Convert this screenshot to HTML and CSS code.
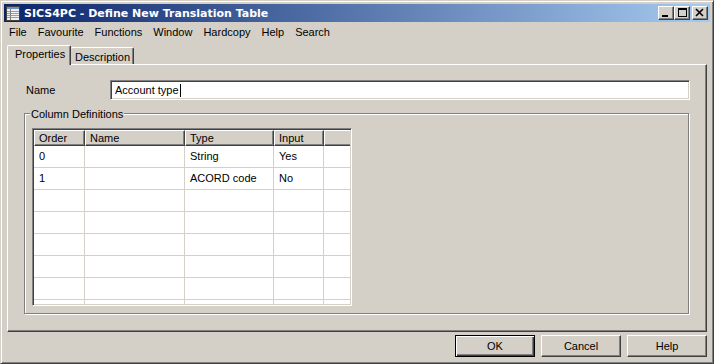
FILE: index.html
```html
<!Doctype html>
<html lang='en'>
<head>
    <meta charset='utf-8'>
    <title>SICS4PC - Define New Translation Table</title>
    <link rel="stylesheet" href="styles.css">
</head>
<body>
    <div class='window'>
        <div class='titlebar'>
            <svg class='app-icon' width='14' height='15' viewBox='0 0 14 15' shape-rendering='crispEdges'>
                <rect x='0.5' y='0.5' width='13' height='14' fill='#f0f0f0' stroke='#404040'/>
                <rect x='1' y='1' width='12' height='2' fill='#6f8fc8'/>
                <path d='M1 5.5H13M1 7.5H13M1 9.5H13M1 11.5H13' stroke='#8aa0c8'/>
                <path d='M4.5 3V14' stroke='#808080'/>
            </svg>
            <span class='title'>SICS4PC - Define New Translation Table</span>
            <div class='caption-btns'>
                <span class='cbtn'>
                    <svg width='14' height='12' viewBox='0 0 14 12' shape-rendering='crispEdges'>
                        <rect x='3' y='8' width='6' height='2' fill='#000'/>
                    </svg>
                </span>
                <span class='cbtn'>
                    <svg width='14' height='12' viewBox='0 0 14 12' shape-rendering='crispEdges'>
                        <rect x='3.5' y='1.5' width='8' height='8' fill='none' stroke='#000'/>
                        <rect x='3' y='1' width='9' height='2' fill='#000'/>
                    </svg>
                </span>
                <span class='cbtn close'>
                    <svg width='14' height='12' viewBox='0 0 14 12'>
                        <path d='M3 2L10 9M10 2L3 9' stroke='#000' stroke-width='1.6'/>
                    </svg>
                </span>
            </div>
        </div>

        <div class='menubar'>
            <span>File</span>
            <span>Favourite</span>
            <span>Functions</span>
            <span>Window</span>
            <span>Hardcopy</span>
            <span>Help</span>
            <span>Search</span>
        </div>

        <div class='tabs'>
            <div class='tab active'>Properties</div>
            <div class='tab'>Description</div>
        </div>

        <div class='panel'>
            <div class='field-row'>
                <label>Name</label>
                <div class='textbox'>Account type<span class='caret'></span></div>
            </div>

            <div class='group'>
                <div class='group-title'>Column Definitions</div>
                <div class='grid'>
                    <div class='grid-row head'>
                        <div>Order</div><div>Name</div><div>Type</div><div>Input</div><div></div>
                    </div>
                    <div class='grid-row'>
                        <div>0</div><div></div><div>String</div><div>Yes</div><div></div>
                    </div>
                    <div class='grid-row'>
                        <div>1</div><div></div><div>ACORD code</div><div>No</div><div></div>
                    </div>
                    <div class='grid-row'><div></div><div></div><div></div><div></div><div></div></div>
                    <div class='grid-row'><div></div><div></div><div></div><div></div><div></div></div>
                    <div class='grid-row'><div></div><div></div><div></div><div></div><div></div></div>
                    <div class='grid-row'><div></div><div></div><div></div><div></div><div></div></div>
                    <div class='grid-row'><div></div><div></div><div></div><div></div><div></div></div>
                    <div class='grid-row'><div></div><div></div><div></div><div></div><div></div></div>
                </div>
            </div>
        </div>

        <div class='buttons'>
            <button class='btn default'>OK</button>
            <button class='btn'>Cancel</button>
            <button class='btn'>Help</button>
        </div>
    </div>
</body>
</html>
```

FILE: styles.css
```css
html,
body {
    margin: 0;
    background-color: #d4d0c8;
    font-family: "Liberation Sans", Arial, sans-serif;
    font-size: 11px;
    color: #000;
}

.window {
    box-sizing: border-box;
    width: 714px;
    height: 364px;
    padding: 3px;
    border: 1px solid;
    border-color: #d4d0c8 #404040 #404040 #d4d0c8;
    box-shadow: inset 1px 1px #ffffff, inset -1px -1px #808080;
    background-color: #d4d0c8;
    display: flex;
    flex-direction: column;
}

/* title bar */
.titlebar {
    height: 18px;
    padding-left: 2px;
    display: flex;
    align-items: center;
    background: linear-gradient(to right, #0a246a, #a6caf0);
}
.app-icon {
    display: block;
    margin-right: 4px;
}
.title {
    color: #ffffff;
    font-family: "DejaVu Sans", sans-serif;
    font-weight: bold;
    font-size: 11px;
    white-space: nowrap;
}
.caption-btns {
    margin-left: auto;
    margin-right: 2px;
    display: flex;
}
.cbtn {
    box-sizing: border-box;
    width: 16px;
    height: 14px;
    border: 1px solid;
    border-color: #ffffff #404040 #404040 #ffffff;
    box-shadow: inset -1px -1px #808080;
    background-color: #d4d0c8;
}
.cbtn svg {
    display: block;
}
.cbtn.close {
    margin-left: 2px;
}

/* menu */
.menubar {
    height: 19px;
    padding-left: 5px;
    display: flex;
    align-items: center;
    gap: 11px;
}

/* tabs */
.tabs {
    height: 19px;
    margin: 4px 0 0 3px;
    display: flex;
    align-items: flex-start;
}
.tab {
    box-sizing: border-box;
    width: 63px;
    height: 17px;
    margin-top: 2px;
    padding: 3px 0 0 4px;
    line-height: 13px;
    border-top: 1px solid #ffffff;
    border-right: 1px solid #404040;
    box-shadow: inset -1px 0 #808080;
    border-radius: 2px 2px 0 0;
    background-color: #d4d0c8;
}
.tab.active {
    position: relative;
    z-index: 1;
    width: 64px;
    height: 20px;
    margin-top: 0;
    padding: 2px 0 0 7px;
    border-left: 1px solid #ffffff;
}

.panel {
    box-sizing: border-box;
    height: 268px;
    margin: 0 3px;
    padding: 15px 16px 0 16px;
    border: 1px solid;
    border-color: #ffffff #404040 #404040 #ffffff;
    box-shadow: inset -1px -1px #808080;
}

.field-row {
    height: 20px;
    display: flex;
    align-items: center;
}
.field-row label {
    width: 84px;
    padding-left: 2px;
}
.textbox {
    box-sizing: border-box;
    flex: 1;
    height: 20px;
    padding-left: 4px;
    line-height: 18px;
    border: 1px solid;
    border-color: #808080 #ffffff #ffffff #808080;
    box-shadow: inset 1px 1px #404040, inset -1px -1px #d4d0c8;
    background-color: #ffffff;
}
.caret {
    display: inline-block;
    width: 1px;
    height: 13px;
    margin-left: 1px;
    vertical-align: -3px;
    background-color: #000;
}

/* group box */
.group {
    box-sizing: border-box;
    height: 201px;
    margin: 13px 1px 0 0;
    padding-left: 5px;
    border: 1px solid #808080;
    box-shadow: inset 1px 1px #ffffff, 1px 1px #ffffff;
}
.group-title {
    width: fit-content;
    margin-top: -7px;
    padding: 0 1px;
    line-height: 14px;
    background-color: #d4d0c8;
}

.grid {
    box-sizing: border-box;
    width: 320px;
    height: 178px;
    margin: 7px 0 0 2px;
    padding: 1px;
    overflow: hidden;
    border: 1px solid;
    border-color: #808080 #ffffff #ffffff #808080;
    box-shadow: inset 1px 1px #404040, inset -1px -1px #d4d0c8;
    background-color: #ffffff;
}
.grid-row {
    display: grid;
    grid-template-columns: 51px 100px 89px 50px 26px;
    height: 22px;
}
.grid-row div {
    box-sizing: border-box;
    padding-left: 5px;
    line-height: 21px;
    white-space: nowrap;
    border-right: 1px solid #d4d0c8;
    border-bottom: 1px solid #d4d0c8;
}
.grid-row div:last-child {
    border-right: 0;
}
.grid-row.head {
    height: 16px;
    background-color: #d4d0c8;
}
.grid-row.head div {
    padding-left: 4px;
    line-height: 14px;
    border: 0;
    border-top: 1px solid #ffffff;
    border-left: 1px solid #ffffff;
    border-right: 1px solid #404040;
    border-bottom: 1px solid #404040;
    box-shadow: inset -1px -1px #808080;
}
.grid-row.head div:last-child {
    border-right: 0;
    box-shadow: inset 0 -1px #808080;
}

/* dialog buttons */
.buttons {
    margin-top: 3px;
    padding-right: 3px;
    display: flex;
    justify-content: flex-end;
    gap: 6px;
}
.btn {
    box-sizing: border-box;
    width: 80px;
    height: 22px;
    padding: 0;
    font-family: "Liberation Sans", Arial, sans-serif;
    font-size: 11px;
    color: #000;
    border: 1px solid;
    border-color: #ffffff #404040 #404040 #ffffff;
    box-shadow: inset -1px -1px #808080;
    background-color: #d4d0c8;
}
.btn.default {
    border-color: #000;
    box-shadow: inset 1px 1px #ffffff, inset -1px -1px #404040, inset -2px -2px #808080;
}
```
